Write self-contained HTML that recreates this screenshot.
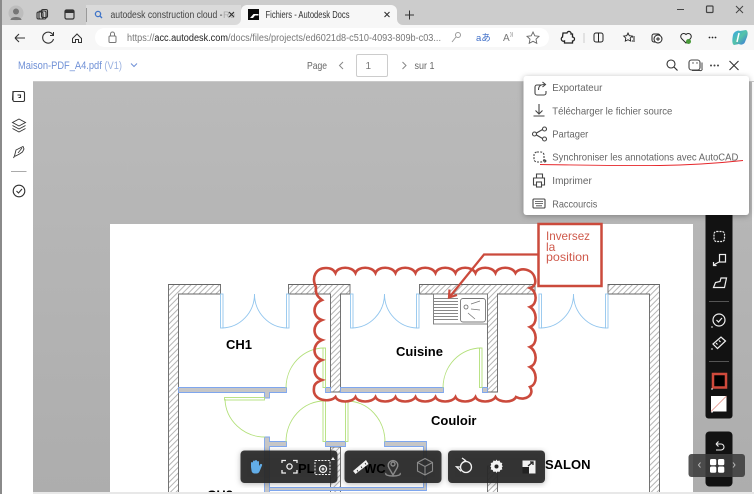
<!DOCTYPE html>
<html><head><meta charset="utf-8"><title>Fichiers - Autodesk Docs</title>
<style>
html,body{margin:0;padding:0;width:754px;height:494px;overflow:hidden;background:#fff}
svg{display:block;position:absolute;left:0;top:0;filter:blur(.35px)}
text{font-family:"Liberation Sans",Arial,sans-serif}
</style></head><body>
<svg width="754" height="494" viewBox="0 0 754 494" xmlns="http://www.w3.org/2000/svg">
<defs>
<pattern id="h" width="4" height="4" patternUnits="userSpaceOnUse" patternTransform="rotate(45)"><rect width="4" height="4" fill="#fff"/><rect width="1" height="4" fill="#b4b4b4"/></pattern>
<filter id="sh" x="-10%" y="-10%" width="120%" height="125%"><feDropShadow dx="0" dy="1" stdDeviation="3" flood-color="#000" flood-opacity=".3"/></filter>
<linearGradient id="cp" x1="0" y1="0" x2="1" y2="1"><stop offset="0" stop-color="#36a3e8"/><stop offset=".5" stop-color="#55c4a8"/><stop offset="1" stop-color="#3a6fe0"/></linearGradient>
<linearGradient id="bg" x1="0" y1="0" x2="0" y2="1"><stop offset="0" stop-color="#bababa"/><stop offset="1" stop-color="#adadad"/></linearGradient>
</defs>

<!-- chrome -->
<rect width="754" height="494" fill="#fff"/>
<rect width="754" height="25" fill="#cccccc"/>
<rect x="0" y="25" width="754" height="25" fill="#f7f7f7"/>
<path d="M86 5h155v20H86z" fill="#dadada"/>
<path d="M247 5h144a6 6 0 0 1 6 6v8a6 6 0 0 0 6 6H235a6 6 0 0 0 6-6v-8a6 6 0 0 1 6-6z" fill="#f7f7f7"/>
<rect x="0" y="0" width="2" height="494" fill="#8a8a8a"/>
<!-- profile -->
<circle cx="16" cy="13" r="7.5" fill="#bdbdbd"/><circle cx="16" cy="11.5" r="3" fill="#777"/><path d="M10.500 20c0-4 11-4 11 0z" fill="#777"/>
<g fill="none" stroke="#333" stroke-width="1.100"><rect x="39" y="11" width="7" height="8" rx="1.500"/><rect x="41.500" y="9.500" width="6" height="8" rx="1.500"/><rect x="37" y="12" width="6" height="7" rx="1.500"/></g>
<rect x="65" y="10" width="9" height="9" rx="1.500" fill="none" stroke="#333" stroke-width="1.200"/><rect x="65" y="10" width="9" height="3" fill="#333"/>
<rect x="86" y="8" width="1" height="14" fill="#9a9a9a"/>
<circle cx="98" cy="14" r="2.600" fill="none" stroke="#3f74c8" stroke-width="1.300"/><path d="M100 16l2 2" stroke="#3f74c8" stroke-width="1.300"/>
<text x="110.500" y="18" font-size="9.800" fill="#444" textLength="112" lengthAdjust="spacingAndGlyphs">autodesk construction cloud -</text><text x="223" y="18" font-size="9.500" fill="#aaa">Re</text>
<path d="M229 12l5 5m0-5l-5 5" stroke="#333" stroke-width="1.100"/>
<rect x="248" y="9" width="11" height="11" fill="#0a0a0a"/><path d="M250 18l3.500-4h5v1.500h-3.500l-2 2.500z" fill="#fff"/>
<text x="265.500" y="18" font-size="9.800" fill="#333" textLength="84" lengthAdjust="spacingAndGlyphs">Fichiers - Autodesk Docs</text>
<path d="M384.500 12l5 5m0-5l-5 5" stroke="#333" stroke-width="1.100"/>
<path d="M405 15h9m-4.500-4.500v9" stroke="#333" stroke-width="1"/>
<path d="M677 9.500h7" stroke="#444"/><rect x="706.500" y="6" width="6.500" height="6.500" rx="1" fill="none" stroke="#444" stroke-width="1.200"/><path d="M736 6l7 7m0-7l-7 7" stroke="#444"/>

<!-- nav row -->
<path d="M15 38h10m-10 0l4-4m-4 4l4 4" fill="none" stroke="#333" stroke-width="1.100"/>
<path d="M53 35a5.500 5.500 0 1 0 .5 4" fill="none" stroke="#333" stroke-width="1.100"/><path d="M53.500 32v3.500h-3.500" fill="none" stroke="#333"/>
<path d="M72.500 38.500l4.500-4.500 4.500 4.500v4h-3v-3h-3v3h-3z" fill="none" stroke="#333" stroke-width="1"/>
<rect x="95" y="28" width="454" height="19" rx="9.500" fill="#fff"/>
<rect x="109" y="36" width="7" height="6.500" rx="1" fill="none" stroke="#777"/><path d="M110.500 36v-2a2 2 0 0 1 4 0v2" fill="none" stroke="#777"/>
<text x="127" y="41" font-size="9.800" fill="#777" textLength="314" lengthAdjust="spacingAndGlyphs"><tspan>https://</tspan><tspan fill="#222">acc.autodesk.com</tspan><tspan>/docs/files/projects/ed6021d8-c510-4093-809b-c03...</tspan></text>
<circle cx="458" cy="35" r="2.500" fill="none" stroke="#999"/><path d="M456 37l-4 5" stroke="#999"/>
<text x="476" y="41" font-size="9.500" fill="#3f6fc8" style="font-family:'Liberation Sans','Noto Sans CJK JP',sans-serif">aあ</text>
<text x="503" y="41" font-size="10" fill="#777">A</text><text x="510" y="36" font-size="5" fill="#777">))</text>
<path d="M533 32l1.800 3.800 4.200.5-3 2.900.8 4.100-3.800-2-3.800 2 .8-4.100-3-2.900 4.200-.5z" fill="none" stroke="#666" stroke-width=".9"/>
<path d="M563 33h4a2 2 0 0 1 4 1h1.500v3a2 2 0 0 1 0 4v2h-8v-2a2 2 0 0 1-2-4z" fill="none" stroke="#222" stroke-width="1.300"/>
<rect x="583.500" y="33" width="1" height="10" fill="#ccc"/>
<rect x="594" y="33" width="9" height="9" rx="2" fill="none" stroke="#222" stroke-width="1"/><path d="M598.500 33v9" stroke="#222"/>
<path d="M628 33l1.300 2.700 3 .4-2.100 2 .5 3-2.700-1.400-2.700 1.400.5-3-2.100-2 3-.4zM632 37h3m-2 2h2m-3 2h3" fill="none" stroke="#222" stroke-width=".9"/>
<rect x="652" y="34" width="8" height="8" rx="2" fill="none" stroke="#222"/><circle cx="658" cy="39" r="4" fill="#f7f7f7" stroke="#222"/><path d="M658 37v4m-2-2h4" stroke="#222" stroke-width=".9"/>
<path d="M686 43l-4.500-4.500a3 3 0 0 1 4.500-4 3 3 0 0 1 4.500 4z" fill="none" stroke="#222" stroke-width="1"/><circle cx="688.500" cy="41.500" r="2.500" fill="#4a9a3a"/>
<circle cx="709.500" cy="37.500" r=".9" fill="#222"/><circle cx="712.500" cy="37.500" r=".9" fill="#222"/><circle cx="715.500" cy="37.500" r=".9" fill="#222"/>
<path d="M733 35c1-4 6-5 7-4l6-1c2 1 2 4 1 7l-2 5c-1 3-5 3-6 2l-5 1c-2-1-2-5-1-10z" fill="url(#cp)"/><path d="M739 33l-2 9" stroke="#fff" stroke-width="1.500"/>

<!-- app toolbar -->
<path d="M2 54a4 4 0 0 1 4-4h748v31H2z" fill="#fff"/>
<text x="18" y="69" font-size="11" fill="#6f90d6" textLength="104" lengthAdjust="spacingAndGlyphs">Maison-PDF_A4.pdf <tspan fill="#9bb2e0">(V1)</tspan></text>
<path d="M131 63.500l3 3 3-3" fill="none" stroke="#6f90d6" stroke-width="1"/>
<text x="307" y="69" font-size="10.500" fill="#666" textLength="20" lengthAdjust="spacingAndGlyphs">Page</text>
<path d="M343 62l-3.500 3.500 3.500 3.500" fill="none" stroke="#888"/>
<rect x="356.500" y="54.500" width="31" height="22" rx="1.500" fill="#fff" stroke="#ccc"/>
<text x="365.500" y="69" font-size="10" fill="#777">1</text>
<path d="M402.500 62l3.500 3.500-3.500 3.500" fill="none" stroke="#888"/>
<text x="414.500" y="69" font-size="10.500" fill="#666" textLength="20" lengthAdjust="spacingAndGlyphs">sur 1</text>
<circle cx="671" cy="64" r="4" fill="none" stroke="#333" stroke-width="1.100"/><path d="M674 67l3.500 3.500" stroke="#333" stroke-width="1.200"/>
<rect x="689" y="60" width="11" height="10" rx="2.500" fill="none" stroke="#444" stroke-width="1.100"/><path d="M692 70.500h8a1.500 1.500 0 0 0 2-2v-6" fill="none" stroke="#444"/><circle cx="693" cy="63" r=".7" fill="#444"/><circle cx="697" cy="63" r=".7" fill="#444"/>
<circle cx="711" cy="65.500" r="1" fill="#444"/><circle cx="714.500" cy="65.500" r="1" fill="#444"/><circle cx="718" cy="65.500" r="1" fill="#444"/>
<path d="M729.500 61l9 9m0-9l-9 9" stroke="#333" stroke-width="1.100"/>

<!-- viewer -->
<rect x="33" y="81" width="719" height="411" fill="url(#bg)"/>
<rect x="33" y="81" width="721" height="1" fill="#c9c9c9"/>
<rect x="2" y="81" width="31" height="413" fill="#fff"/>
<g fill="none" stroke="#333" stroke-width="1.100">
<rect x="13" y="91.500" width="11.500" height="10" rx="1.500"/><path d="M13 91l-.5 9M17.500 95h3v2.500h-2"/>
<path d="M19 119l6.500 3.500-6.500 3.500-6.500-3.500zM12.500 125.500l6.500 3.500 6.500-3.500M12.500 128.500l6.500 3.500 6.500-3.500" stroke-width=".9"/>
<path d="M14.500 156l1.500-6 7-3.500 1 2.500-1.500 3-3 2-4 2zM14.500 156l-1 2" stroke-width=".9"/><path d="M18 153l4-5" stroke-width=".8"/>
<circle cx="19" cy="191" r="5.800"/><path d="M16.500 191l2 2 3.500-4"/></g>
<rect x="11" y="171" width="15.500" height="1" fill="#aaa"/>

<!-- paper -->
<rect x="110" y="224" width="583" height="268" fill="#fff"/>

<!-- walls -->
<g fill="url(#h)" stroke="#666" stroke-width=".9">
<path d="M168.500 494V284.500H220.500V294H178.500V494"/>
<path d="M288.500 284.500H350V294H340.500V392H330.500V294H288.500z"/>
<path d="M419.500 284.500H535V294H497.500V392H487.500V294H419.500z"/>
<path d="M608 284.500H659.500V494H649.500V294H608z"/>
<rect x="330.500" y="447" width="10" height="47"/>
<rect x="487.500" y="466" width="10" height="28"/>
</g>
<!-- gray partitions -->
<g fill="#c6c6c6" stroke="#7ea6ee" stroke-width=".9">
<path d="M178.500 387.500H286.500V392.500H269.500V398H264.500V392.500H178.500z"/>
<path d="M325.500 387.500H330.500V392.500H325.500z"/>
<path d="M340.500 387.500H443.500V392.500H340.500z"/>
<path d="M482.500 387.500H487.500V392.500H482.500z"/>
<path d="M264.500 437H269.500V441.500H286.500V446.500H269.500V494H264.500z"/>
<path d="M325.500 441.500H345.500V446.500H325.500z"/>
<path d="M384.500 441.500H426.500V490.500H269.500V487.500H423.500V446.500H384.500z"/>
</g>
<!-- blue doors -->
<g fill="none" stroke="#93c6ee" stroke-width=".9">
<rect x="220.500" y="294" width="2.500" height="34"/><rect x="286.500" y="294" width="2.500" height="34"/>
<path d="M222 328A33 34 0 0 0 254.500 294A33 34 0 0 0 287 328"/>
<rect x="350.500" y="294" width="2.500" height="34"/><rect x="416.500" y="294" width="2.500" height="34"/>
<path d="M352 328A33 34 0 0 0 384.500 294A33 34 0 0 0 417 328"/>
<rect x="539" y="294" width="2.500" height="34"/><rect x="605.500" y="294" width="2.500" height="34"/>
<path d="M541 328A33 34 0 0 0 573.500 294A33 34 0 0 0 606 328"/>
</g>
<!-- green doors -->
<g fill="none" stroke="#b3e07a" stroke-width=".9">
<rect x="323" y="348" width="2.500" height="39.500"/><path d="M324 348A38 40 0 0 0 286 388"/>
<rect x="224.500" y="397.500" width="40" height="2.500"/><path d="M225 399A40 39 0 0 0 265 437"/>
<rect x="323" y="401" width="2.500" height="40.500"/><path d="M324 401A38 41 0 0 0 286 442"/>
<rect x="345.500" y="401" width="2.500" height="40.500"/><path d="M347 401A38 41 0 0 1 385 442"/>
<rect x="479.500" y="348" width="2.500" height="39.500"/><path d="M481 348A38 40 0 0 0 443 388"/>
</g>
<!-- counter/sink -->
<rect x="433.500" y="294" width="54" height="30" fill="#fff" stroke="#777" stroke-width=".9"/>
<path d="M434 298.500h24M434 301.500h24M434 304.500h24M434 307.500h24M434 310.500h24M434 313.500h24M434 316.500h24M434 319.500h24" stroke="#888" stroke-width=".9"/>
<rect x="460.500" y="298.500" width="25" height="23.500" rx="2.500" fill="#fff" stroke="#777" stroke-width=".9"/>
<circle cx="466" cy="307" r="2" fill="none" stroke="#666" stroke-width=".8"/>
<path d="M471 304l9-3M471 309l9 1M468 313l7 6" stroke="#777" stroke-width=".8"/>
<!-- room labels -->
<g font-weight="bold" font-size="13" fill="#000">
<text x="226" y="349">CH1</text>
<text x="396" y="356">Cuisine</text>
<text x="431" y="425">Couloir</text>
<text x="545" y="469">SALON</text>
<text x="207" y="499.500">CH2</text>
</g>
<rect x="33" y="492" width="721" height="2" fill="#e8e8e8"/>

<!-- cloud -->
<path d="M316 287C311 277 316 268 326 268C331 268 334 270 335.500 273C338 266 352 266 355.500 273C358 266 372 266 375.500 273C378 266 392 266 395.500 273C398 266 412 266 415.500 273C418 266 432 266 435.500 273C438 266 452 266 455.500 273C458 266 472 266 475.500 273C478 266 492 266 495.500 273C498 266 512 266 515.500 273C519 267 533 268 535 279C536 283 535 286 530 288C537 291 538 304 530 307C537 311 538 324 530 327C537 331 538 344 530 347C537 351 538 364 530 367C537 371 538 384 530 387C535 394 526 402 516 397C513 403 499 403 495.500 397C492 403 478 403 475.500 397C472 403 458 403 455.500 397C452 403 438 403 435.500 397C432 403 418 403 415.500 397C412 403 398 403 395.500 397C392 403 378 403 375.500 397C372 403 358 403 355.500 397C352 403 338 403 335.500 397C330 403 312 401 314 388C314 384 317 382 322 380C312 377 312 364 322 360C312 357 312 344 322 340C312 337 312 324 322 320C312 317 312 304 322 300C318 297 315 294 316 287Z" fill="none" stroke="#cb4a3c" stroke-width="2.600"/>
<!-- callout -->
<rect x="538.500" y="224" width="63" height="62" fill="#fff" stroke="#cb4a3c" stroke-width="2.500"/>
<path d="M538 254.500H484L450 296.500M449.500 289.500L449 297.500L457 295" fill="none" stroke="#cb4a3c" stroke-width="2.200"/>
<g font-size="12" fill="#cf5a4c"><text x="546" y="240" textLength="44" lengthAdjust="spacingAndGlyphs">Inversez</text><text x="546" y="251">la</text><text x="546" y="261" textLength="43" lengthAdjust="spacingAndGlyphs">position</text></g>

<!-- right toolbar -->
<rect x="705.500" y="205" width="27" height="213.500" rx="3" fill="#121212"/>
<rect x="705.500" y="431.500" width="27" height="55" rx="4" fill="#121212"/>
<g fill="none" stroke="#eee" stroke-width="1.200">
<rect x="714" y="231.500" width="10.500" height="10" stroke-dasharray="2 1" rx="2.500"/>
<rect x="719.500" y="254.500" width="6" height="7.500"/><path d="M719 262l-5.500 3m0-3v3.500h3"/>
<path d="M713.500 287.500l2-5 4.500-1 1-3.500h5.500l-2 9.500z"/>
<circle cx="719" cy="320" r="6"/><path d="M716.500 320l2 2 3.500-4"/>
<path d="M713 344l8-7 4.500 4-8 7.500zM716 343l1.500 1.500M719 340.500l1.500 1.500M722 338l1.500 1.500"/>
</g>
<rect x="709" y="301" width="20" height="1" fill="#555"/><rect x="709" y="361" width="20" height="1" fill="#555"/>
<rect x="713" y="374" width="13" height="13.500" fill="#000" stroke="#cf4a3c" stroke-width="2.500"/>
<rect x="711" y="396" width="15.500" height="15.500" fill="#fff"/><path d="M711 411.500l15.500-15.500" stroke="#e28b80" stroke-width=".8"/>
<path d="M711 327h2M711 349h2M711 389h2M711 412h2" stroke="#ddd"/>
<path d="M716 444h5a3 3 0 0 1 0 6h-5m0-6l2.500-2.500m-2.500 2.500l2.500 2.500" fill="none" stroke="#eee" stroke-width="1.100"/>
<rect x="688.500" y="454" width="56.500" height="23" rx="3" fill="#3c3c3c" fill-opacity=".88"/>
<path d="M700.500 462.500l-2 2.500 2 2.500M733 462.500l2 2.500-2 2.500" fill="none" stroke="#bbb"/>
<g fill="#fff"><rect x="710" y="459" width="6.300" height="6.300" rx="1.500"/><rect x="718" y="459" width="6.300" height="6.300" rx="1.500"/><rect x="710" y="466.500" width="6.300" height="6.300" rx="1.500"/><rect x="718" y="466.500" width="6.300" height="6.300" rx="1.500"/></g>

<!-- menu -->
<rect x="523.500" y="76" width="225.500" height="139" rx="3" fill="#fff" filter="url(#sh)"/>
<g font-size="10.200" fill="#666">
<text x="552.300" y="91" textLength="50" lengthAdjust="spacingAndGlyphs">Exportateur</text>
<text x="552.300" y="114.300" textLength="120" lengthAdjust="spacingAndGlyphs">Télécharger le fichier source</text>
<text x="552.300" y="137.500" textLength="36" lengthAdjust="spacingAndGlyphs">Partager</text>
<text x="552.300" y="160.700" textLength="186" lengthAdjust="spacingAndGlyphs">Synchroniser les annotations avec AutoCAD</text>
<text x="552.300" y="184.200" textLength="39.500" lengthAdjust="spacingAndGlyphs">Imprimer</text>
<text x="552.300" y="207.300" textLength="45" lengthAdjust="spacingAndGlyphs">Raccourcis</text>
</g>
<g fill="none" stroke="#444" stroke-width="1.100">
<path d="M541 85h-4a2 2 0 0 0-2 2v6a2 2 0 0 0 2 2h7a2 2 0 0 0 2-2v-2M538.500 90c0-4 2-5.500 6-5.500M542.500 82l3 2.500-3 2.500"/>
<path d="M539 104v9.500m-3.500-3l3.500 3.500 3.500-3.500M533.500 116h11"/>
<circle cx="534.500" cy="134" r="2"/><circle cx="544.500" cy="129" r="2"/><circle cx="544.500" cy="139" r="2"/><path d="M536.500 133l6-3.500M536.500 135l6 3.500"/>
<rect x="534" y="152" width="10" height="10" rx="3" stroke-dasharray="2 1.200"/><path d="M543 161h3m-1.500-1.500l1.500 1.500-1.500 1.500"/>
<path d="M536.500 178v-4h6v4"/><path d="M536.500 185h-3v-7h11v7h-3"/><rect x="536.500" y="182" width="5" height="5"/>
<rect x="533" y="199" width="12" height="9" rx="1"/><path d="M535 201.500h8M535 203.500h8M536 205.800h6" stroke-width=".8"/>
</g>
<path d="M540 164.500C580 165 620 166 660 165.500C690 165 720 163 743 160.500" fill="none" stroke="#e6262a" stroke-width=".9"/>

<!-- bottom toolbars -->
<g fill="#262626" fill-opacity=".92" filter="url(#sh)">
<rect x="240.500" y="450.500" width="97" height="32.500" rx="4"/>
<rect x="344.500" y="450.500" width="97" height="32.500" rx="4"/>
<rect x="448" y="450.500" width="97" height="32.500" rx="4"/>
</g>
<g font-weight="bold" font-size="13" fill="#000">
<text x="298" y="473">PL</text>
<text x="364" y="473">WC</text>
</g>
<path d="M253 466v-4a1 1 0 0 1 2 0v-1.500a1 1 0 0 1 2 0v-.5a1 1 0 0 1 2 0v1a1 1 0 0 1 2 0v4l1-1.500a1 1 0 0 1 2 1l-2.500 6a3.500 3.500 0 0 1-3 2h-2a3 3 0 0 1-3-3z" fill="#62ade8" transform="translate(-2 1)"/>
<g fill="none" stroke="#f2f2f2" stroke-width="1.300">
<path d="M282 463v-2.500h4M293 460.500h4v2.500M282 470v3h4M293 473h4v-3"/>
<circle cx="289.500" cy="466.500" r="2.600"/>
<rect x="315" y="460.500" width="15" height="14" stroke-dasharray="2 1.200" stroke-width="1"/>
<circle cx="323" cy="469" r="3.500"/><path d="M323 467.500v3m-1.500-1.500h3"/>
<circle cx="466" cy="467" r="5.500"/><path d="M460 467l-3.500-.2 4.500 4.500M462 458l3.500 2.500-3.500 2.500"/>
</g>
<rect x="522.500" y="460.500" width="13" height="13" fill="#f2f2f2"/>
<path d="M331 460l2-3 2 3z" fill="#eee"/>
<path d="M353 471l13-11 2.500 4-13 10z" fill="#f2f2f2"/>
<path d="M357 470l1 1.500M361 466.500l1 1.500M365 463l1 1.500" stroke="#222" stroke-width=".8"/>
<g fill="none" stroke="#8a8a8a" stroke-width="1.400"><circle cx="393" cy="464" r="2"/><path d="M393 475l-4-7a4.800 4.800 0 1 1 8 0zM386 473c-3 4 17 4 14 0"/>
<path d="M425 458.500l7.500 4v8.500l-7.500 4-7.500-4v-8.500zM417.500 462.500l7.500 4 7.500-4M425 466.500v9" stroke-width="1.100"/></g>
<path d="M496.500 460l1 1.500 2-.5.800 2 2 .5-.5 2 1 1.200-1 1.300.5 2-2 .5-.8 2-2-.5-1 1.500-1-1.500-2 .5-.8-2-2-.5.500-2-1-1.300 1-1.200-.5-2 2-.5.800-2 2 .5z" fill="#f2f2f2" transform="translate(0 -.5)"/><circle cx="496.500" cy="466.500" r="2" fill="#242424"/>
<path d="M528 466l5-4m0 3v-3h-3" fill="none" stroke="#222" stroke-width="1.300"/>
<rect x="522.500" y="467" width="6.500" height="6.500" fill="#222"/>
</svg>
</body></html>
